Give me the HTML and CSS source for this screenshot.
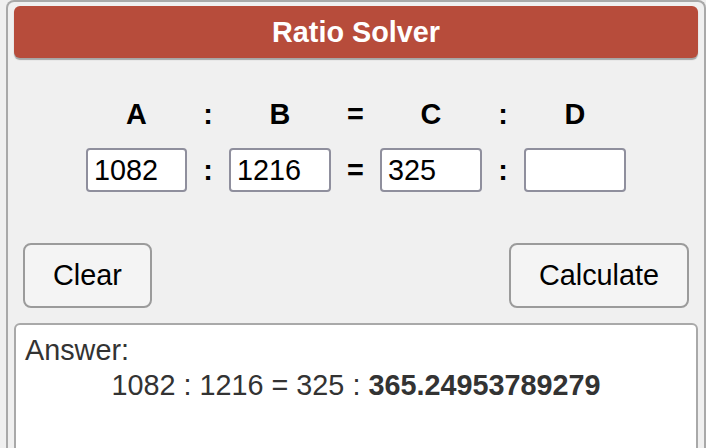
FILE: index.html
```
<!DOCTYPE html>
<html>
<head>
<meta charset="utf-8">
<link rel="stylesheet" href="styles.css">
</head>
<body>
<div class="solver">
  <div class="title">Ratio Solver</div>
  <div class="grid">
    <div class="lbl">A</div>
    <div class="lbl">:</div>
    <div class="lbl">B</div>
    <div class="lbl">=</div>
    <div class="lbl">C</div>
    <div class="lbl">:</div>
    <div class="lbl">D</div>
    <input class="num" type="text" value="1082">
    <div class="sep">:</div>
    <input class="num" type="text" value="1216">
    <div class="sep">=</div>
    <input class="num" type="text" value="325">
    <div class="sep">:</div>
    <input class="num" type="text" value="">
  </div>
  <div class="buttons">
    <button class="btn">Clear</button>
    <button class="btn">Calculate</button>
  </div>
  <div class="answer">
    <div class="answer-label">Answer:</div>
    <div class="answer-line">1082 : 1216 = 325 : <b>365.24953789279</b></div>
  </div>
</div>
</body>
</html>
```
FILE: styles.css
```
html, body {
  margin: 0;
  padding: 0;
  background: #f0f0f0;
  overflow: hidden;
}
body {
  font-family: "Liberation Sans", Arial, sans-serif;
  font-size: 28.8px;
}
.solver {
  margin-left: 6px;
  width: 684px;
  height: 460px;
  padding: 4px 6px 0 6px;
  border: 2px solid #a9a9a9;
  border-bottom: none;
  border-radius: 8px 8px 0 0;
  background: #f0f0f0;
  box-sizing: content-box;
}
.title {
  height: 52px;
  line-height: 52px;
  background: #b74c3b;
  color: #fff;
  font-weight: bold;
  font-size: 28.8px;
  text-align: center;
  border-radius: 6px;
  box-shadow: 0 2px 1px #a6a6a6;
}
.grid {
  display: grid;
  grid-template-columns: 101px 42px 102px 49px 102px 42px 102px;
  grid-template-rows: 32px 44px;
  row-gap: 18px;
  justify-content: center;
  align-items: center;
  margin-top: 40px;
}
.lbl, .sep {
  font-weight: bold;
  text-align: center;
  line-height: 32px;
  color: #000;
}
.num {
  width: 100%;
  height: 44px;
  box-sizing: border-box;
  border: 2px solid #8f8f9d;
  border-radius: 4px;
  background: #fff;
  font-family: "Liberation Sans", Arial, sans-serif;
  font-size: 28.8px;
  padding: 0 6px;
  color: #000;
  margin: 0;
}
.buttons {
  display: flex;
  justify-content: space-between;
  padding: 0 9px;
  margin-top: 51px;
}
.btn {
  height: 65px;
  padding: 0 28px;
  background: #f4f4f4;
  border: 2px solid #9b9b9b;
  border-radius: 8px;
  font-family: "Liberation Sans", Arial, sans-serif;
  font-size: 28.8px;
  color: #000;
  margin: 0;
}
.answer {
  margin-top: 15px;
  background: #fff;
  border: 2px solid #a9a9a9;
  border-radius: 6px;
  height: 200px;
  padding: 8px 9px;
  color: #333;
  line-height: 35px;
}
.answer-line {
  text-align: center;
}
.answer-line b {
  font-weight: bold;
}
```
